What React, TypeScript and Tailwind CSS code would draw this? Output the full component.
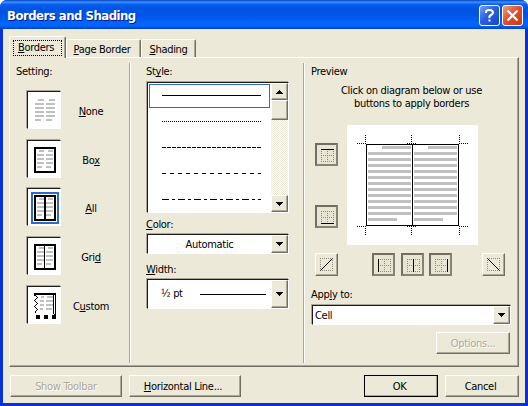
import type { ReactNode } from "react";

const SUNKEN =
  "border border-t-[#1c1b18] border-l-[#1c1b18] border-r-white border-b-white shadow-[-1px_-1px_0_#aca899]";
const RAISED =
  "border border-t-white border-l-white border-r-[#716f64] border-b-[#716f64] shadow-[inset_-1px_-1px_0_#aca899]";

function U({ children }: { children: ReactNode }) {
  return (
    <span className="underline decoration-1 underline-offset-[1px] [text-decoration-skip-ink:none]">{children}</span>
  );
}

function Label({ children, className = "" }: { children: ReactNode; className?: string }) {
  return <div className={`h-[12px] leading-[14px] whitespace-nowrap ${className}`}>{children}</div>;
}

function Tab({ children, className = "" }: { children: ReactNode; className?: string }) {
  return (
    <div
      className={`flex justify-center rounded-t-[2px] border-t border-l border-r border-t-white border-l-white border-r-[#716f64] bg-[#ece9d8] shadow-[inset_-1px_0_0_#aca899] leading-[14px] whitespace-nowrap ${className}`}
    >
      {children}
    </div>
  );
}

function Arrow({ up = false }: { up?: boolean }) {
  return (
    <svg width="7" height="4" viewBox="0 0 7 4" shapeRendering="crispEdges" className={up ? "rotate-180" : ""}>
      <path d="M0 0h7v1H0zM1 1h5v1H1zM2 2h3v1H2zM3 3h1v1H3z" />
    </svg>
  );
}

function ArrowButton({ up, className = "" }: { up?: boolean; className?: string }) {
  return (
    <div className={`flex w-[17px] shrink-0 items-center justify-center bg-[#ece9d8] ${RAISED} ${className}`}>
      <Arrow up={up} />
    </div>
  );
}

function Button({ children, className = "", disabled = false }: { children: ReactNode; className?: string; disabled?: boolean }) {
  return (
    <button
      className={`flex h-[22px] items-center justify-center pt-[2px] leading-[12px] whitespace-nowrap ${RAISED} ${
        disabled ? "text-[#aca899] [text-shadow:1px_1px_0_#fff]" : ""
      } ${className}`}
    >
      {children}
    </button>
  );
}

type Kind = "none" | "box" | "all" | "grid" | "custom";

function SettingIcon({ kind }: { kind: Kind }) {
  const wide = kind === "none";
  const l = wide ? 8 : kind === "custom" ? 13 : 10;
  const w = wide ? 9 : 7;
  const r = 19;
  const rows = wide ? 6 : kind === "custom" ? 4 : 5;
  const top = wide ? 8 : 10;
  return (
    <div className={`h-[38px] w-[34px] bg-white ${SUNKEN}`}>
      <svg width="34" height="38" viewBox="0 0 34 38" shapeRendering="crispEdges" className="-mt-px -ml-px">
        {Array.from({ length: rows }, (_, i) => {
          const first = i === 0;
          const last = i === rows - 1;
          const lw = kind === "custom" ? 4 : w;
          const cut = wide ? 3 : kind === "custom" ? 1 : 2;
          return (
            <g key={i} fill="#c0c0c0">
              <rect x={l + (first ? cut : 0)} y={top + i * 4} width={lw - (first || last ? cut : 0)} height="2" />
              <rect x={r + (first ? cut : 0)} y={top + i * 4} width={w - (first || last ? cut : 0)} height="2" />
            </g>
          );
        })}
        {(kind === "box" || kind === "all" || kind === "grid") && (
          <rect x="8" y="8" width="20" height="24" fill="none" stroke="#000" strokeWidth="2" />
        )}
        {kind === "all" && (
          <>
            <rect x="17" y="8" width="2" height="24" />
            <rect x="5" y="5" width="26" height="30" fill="none" stroke="#316ac5" strokeWidth="2" />
          </>
        )}
        {kind === "grid" && <rect x="17" y="8" width="1" height="24" />}
        {kind === "custom" && (
          <>
            <path d="M7 7h22v2H7zM26 9h1v19h-1zM28 9h1v19h-1zM9 29h4v4H9zM17 29h4v4h-4zM25 29h4v4h-4zM27 28h2v1h-2z" />
            <path d="M7 9h2v1H7zM9 10h1v1H9zM10 11h1v1h-1zM9 12h1v1H9zM8 13h1v1H8zM7 14h1v1H7zM8 15h1v1H8zM9 16h1v1H9zM10 17h1v1h-1zM9 18h1v1H9zM8 19h1v1H8zM7 20h1v1H7zM8 21h1v1H8zM9 22h1v1H9zM10 23h1v1h-1zM9 24h1v1H9zM8 25h1v1H8zM8 26h1v1H8z" />
          </>
        )}
      </svg>
    </div>
  );
}

const settings: { kind: Kind; label: ReactNode; gap: string }[] = [
  { kind: "none", label: <><U>N</U>one</>, gap: "mb-[11px]" },
  { kind: "box", label: <>Bo<U>x</U></>, gap: "mb-[10px]" },
  { kind: "all", label: <><U>A</U>ll</>, gap: "mb-[11px]" },
  { kind: "grid", label: <>Gri<U>d</U></>, gap: "mb-[11px]" },
  { kind: "custom", label: <>C<U>u</U>stom</>, gap: "" },
];

const dashes = ["", "1 1", "4 1", "4 4", "7 3 3 3"];

function EdgeButton({ d, pressed = false }: { d: string; pressed?: boolean }) {
  return (
    <div
      className={`h-[23px] w-[23px] shrink-0 ${
        pressed ? "border-2 border-t-[#716f64] border-l-[#716f64] border-r-[#858375] border-b-[#858375] bg-[#e8e5d2]" : RAISED
      }`}
    >
      <svg
        width="23"
        height="23"
        viewBox="0 0 23 23"
        fill="none"
        className={pressed ? "-mt-[2px] -ml-[2px]" : "-mt-px -ml-px"}
      >
        {pressed ? (
          <path d="M6 6.500h13M6 12.500h13M6 18.500h13M6.500 6v13M12.500 6v13M18.500 6v13" stroke="#8d8b7e" strokeDasharray="1 1" />
        ) : (
          <path d="M5 5.500h13M5 17.500h13M5.500 5v13M17.500 5v13" stroke="#8d8b7e" strokeDasharray="1 1" />
        )}
        <path d={d} stroke="#000" />
      </svg>
    </div>
  );
}

function Diagram() {
  return (
    <svg width="131" height="120" viewBox="0 0 131 120" shapeRendering="crispEdges" className="bg-white">
      {[21, 67].map((x) => (
        <g key={x} fill="#c0c0c0">
          <rect x={x + 14} y="21" width="29" height="3" />
          {Array.from({ length: 11 }, (_, i) => (
            <rect key={i} x={x} y={27 + i * 6} width="43" height="3" />
          ))}
          <rect x={x} y="93" width="29" height="3" />
        </g>
      ))}
      <path d="M19.5 19.5h92v81h-92zM65.5 20v80" fill="none" stroke="#000" />
      <path
        d="M10 18.5h9M60 18.5h9M112 18.5h10M10 101.5h9M60 101.5h9M112 101.5h10M18.5 10v9M64.5 10v9M112.5 10v9M18.5 101v9M64.5 101v9M112.5 101v9"
        fill="none"
        stroke="#000"
        strokeDasharray="1 1"
      />
    </svg>
  );
}

function Divider() {
  return <div className="mt-[5px] h-[300px] w-[2px] shrink-0 border-r border-l border-l-[#aca899] border-r-white" />;
}

export default function App() {
  return (
    <div className="flex h-[406px] w-[528px] flex-col overflow-hidden rounded-t-[7px] bg-[#0831d9] font-['DejaVu_Sans_Condensed','DejaVu_Sans',sans-serif] text-[11px] tracking-[-0.3px] text-black [font-stretch:condensed]">
      <header className="flex h-[29px] shrink-0 items-center justify-between bg-[linear-gradient(180deg,#0540c0_0%,#3c90ff_7%,#0a5fee_15%,#0054e3_30%,#0055e5_55%,#0066ff_80%,#0062f8_90%,#0040c8_100%)] pr-[5px] pl-[7px]">
        <h1 className="mt-[3px] text-[13px] leading-[16px] font-bold tracking-[-0.5px] whitespace-nowrap text-white [text-shadow:1px_1px_0_#0a1883]">
          Borders and Shading
        </h1>
        <div className="mt-[2px] flex gap-[2px]">
          <div className="h-[21px] w-[21px] rounded-[3px] border border-white bg-[linear-gradient(135deg,#7a9ff5,#2b5fe0_45%,#1746c9)]">
            <svg width="19" height="19" viewBox="0 0 19 19" fill="none" stroke="#fff" strokeWidth="2">
              <path d="M6 7V6q0-2 3.5-2T13 6.500q0 1.500-2 2.500T9.500 12M9.500 13.500v2" />
            </svg>
          </div>
          <div className="h-[21px] w-[21px] rounded-[3px] border border-white bg-[linear-gradient(135deg,#f0a085,#e25030_45%,#c83a10)]">
            <svg width="19" height="19" viewBox="0 0 19 19" stroke="#fff" strokeWidth="2.200">
              <path d="M4.500 4.500l10 10M14.500 4.500l-10 10" />
            </svg>
          </div>
        </div>
      </header>

      <main className="mr-[3px] mb-[3px] ml-[3px] flex h-[374px] flex-col bg-[#ece9d8] pt-[7px] pr-[6px] pl-[6px]">
        <div className="z-10 flex h-[21px] items-end">
          <Tab className="-mb-px h-[22px] w-[57px] pt-[3px]">
            <span className="h-[16px] w-[49px] border border-dotted border-black pr-[3px] text-center">
              <U>B</U>orders
            </span>
          </Tab>
          <Tab className="h-[18px] w-[75px] pt-[3px] pr-[3px]"><span><U>P</U>age Border</span></Tab>
          <Tab className="h-[18px] w-[55px] pt-[3px]"><span><U>S</U>hading</span></Tab>
        </div>

        <section className={`flex h-[310px] w-[510px] ${RAISED}`}>
          <div className="flex w-[119px] shrink-0 flex-col pt-[7px]">
            <Label className="ml-[6px]">Setting:</Label>
            <div className="mt-[14px] ml-[17px] flex flex-col">
              {settings.map((s) => (
                <div key={s.kind} className={`flex items-center ${s.gap}`}>
                  <SettingIcon kind={s.kind} />
                  <Label className="mt-[2px] w-[60px] text-center">{s.label}</Label>
                </div>
              ))}
            </div>
          </div>
          <Divider />

          <div className="flex w-[172px] shrink-0 flex-col pt-[7px] pl-[15px]">
            <Label>St<U>y</U>le:</Label>
            <div className={`mt-[5px] ml-px flex h-[131px] w-[142px] bg-white ${SUNKEN}`}>
              <div className="flex flex-1 flex-col pt-px pl-px">
                {dashes.map((dash, i) => (
                  <div
                    key={i}
                    className={`mb-[2px] h-[24px] w-[121px] shrink-0 ${i === 0 ? "border border-[#316ac5]" : "border border-transparent"}`}
                  >
                    <svg width="99" height="1" className="mt-[10px] ml-[12px] block" shapeRendering="crispEdges">
                      <path d="M0 .5h99" stroke="#000" strokeDasharray={dash || undefined} />
                    </svg>
                  </div>
                ))}
              </div>
              <div className="flex w-[17px] flex-col justify-between bg-[repeating-conic-gradient(#fff_0_25%,#ece9d8_0_50%)] bg-[length:2px_2px]">
                <div>
                  <ArrowButton up className="h-[17px]" />
                  <div className={`h-[20px] w-[17px] bg-[#ece9d8] ${RAISED}`} />
                </div>
                <ArrowButton className="h-[17px]" />
              </div>
            </div>
            <Label className="mt-[5px]"><U>C</U>olor:</Label>
            <div className={`mt-[4px] ml-px flex h-[20px] w-[142px] bg-white ${SUNKEN}`}>
              <div className="flex-1 text-center leading-[20px]">Automatic</div>
              <ArrowButton />
            </div>
            <Label className="mt-[9px]"><U>W</U>idth:</Label>
            <div className={`mt-[4px] ml-px flex h-[30px] w-[142px] items-stretch bg-white ${SUNKEN}`}>
              <div className="flex flex-1 items-center justify-between pr-[5px] pl-[13px]">
                <span>½ pt</span>
                <span className="h-px w-[66px] bg-black" />
              </div>
              <ArrowButton />
            </div>
          </div>
          <Divider />

          <div className="flex flex-1 flex-col pt-[7px] pl-[6px]">
            <Label>Preview</Label>
            <div className="mt-[7px] w-[201px] text-center leading-[13px]">
              Click on diagram below or use
              <br />
              buttons to apply borders
            </div>
            <div className="mt-[15px] ml-[4px] flex">
              <div className="mt-[18px] mr-[9px] flex w-[23px] flex-col gap-[39px]">
                <EdgeButton pressed d="M6 6.500h13" />
                <EdgeButton pressed d="M6 18.500h13" />
              </div>
              <Diagram />
            </div>
            <div className="mt-[8px] ml-[4px] flex">
              <EdgeButton d="M5.500 17.500l12-12" />
              <div className="ml-[34px] flex gap-[6px]">
                <EdgeButton pressed d="M6.500 6v13" />
                <EdgeButton pressed d="M12.500 6v13" />
              </div>
              <div className="ml-[5px]">
                <EdgeButton pressed d="M18.500 6v13" />
              </div>
              <div className="ml-[30px]">
                <EdgeButton d="M5.500 5.500l12 12" />
              </div>
            </div>
            <Label className="mt-[12px]">App<U>l</U>y to:</Label>
            <div className={`mt-[5px] ml-px flex h-[20px] w-[199px] bg-white ${SUNKEN}`}>
              <div className="flex-1 pl-[2px] leading-[20px]">Cell</div>
              <ArrowButton />
            </div>
            <Button disabled className="mt-[7px] ml-[125px] w-[74px]">Options...</Button>
          </div>
        </section>

        <footer className="mt-[8px] ml-px flex">
          <Button disabled className="w-[112px]">Show Toolbar</Button>
          <Button className="ml-[7px] w-[112px] pr-[4px]"><span><U>H</U>orizontal Line...</span></Button>
          <Button className="ml-[123px] w-[74px] pr-[3px] outline-1 -outline-offset-1 outline-black">OK</Button>
          <Button className="ml-[7px] w-[74px] pr-[3px]">Cancel</Button>
        </footer>
      </main>
    </div>
  );
}
